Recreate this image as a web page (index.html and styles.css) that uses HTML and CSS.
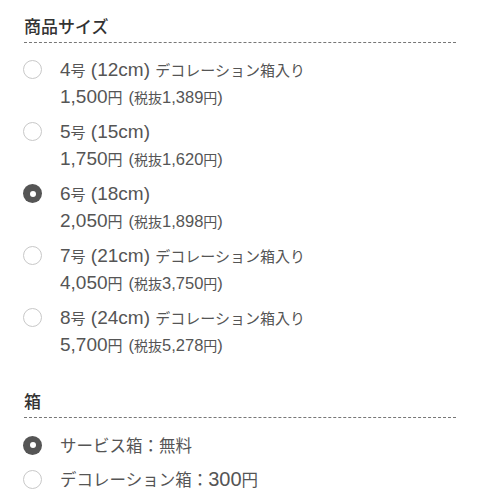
FILE: index.html
```html
<!DOCTYPE html>
<html lang="ja">
<head>
<meta charset="utf-8">
<link rel="stylesheet" href="styles.css">
</head>
<body>
<div class="page">
  <section class="group">
    <h2 class="group-title">商品サイズ</h2>
    <div class="options options-size">
      <label class="option">
        <span class="radio"></span>
        <span class="option-text">
          <span class="line"><span class="en">4</span>号<span class="en"> (12cm) </span>デコレーション箱入り</span>
          <span class="line"><span class="en">1,500</span>円<small class="tax"><span class="en">(</span>税抜<span class="en">1,389</span>円<span class="en">)</span></small></span>
        </span>
      </label>
      <label class="option">
        <span class="radio"></span>
        <span class="option-text">
          <span class="line"><span class="en">5</span>号<span class="en"> (15cm)</span></span>
          <span class="line"><span class="en">1,750</span>円<small class="tax"><span class="en">(</span>税抜<span class="en">1,620</span>円<span class="en">)</span></small></span>
        </span>
      </label>
      <label class="option">
        <span class="radio checked"></span>
        <span class="option-text">
          <span class="line"><span class="en">6</span>号<span class="en"> (18cm)</span></span>
          <span class="line"><span class="en">2,050</span>円<small class="tax"><span class="en">(</span>税抜<span class="en">1,898</span>円<span class="en">)</span></small></span>
        </span>
      </label>
      <label class="option">
        <span class="radio"></span>
        <span class="option-text">
          <span class="line"><span class="en">7</span>号<span class="en"> (21cm) </span>デコレーション箱入り</span>
          <span class="line"><span class="en">4,050</span>円<small class="tax"><span class="en">(</span>税抜<span class="en">3,750</span>円<span class="en">)</span></small></span>
        </span>
      </label>
      <label class="option">
        <span class="radio"></span>
        <span class="option-text">
          <span class="line"><span class="en">8</span>号<span class="en"> (24cm) </span>デコレーション箱入り</span>
          <span class="line"><span class="en">5,700</span>円<small class="tax"><span class="en">(</span>税抜<span class="en">5,278</span>円<span class="en">)</span></small></span>
        </span>
      </label>
    </div>
  </section>
  <section class="group group-box">
    <h2 class="group-title">箱</h2>
    <div class="options options-box">
      <label class="option">
        <span class="radio checked"></span>
        <span class="option-text"><span class="line">サービス箱：無料</span></span>
      </label>
      <label class="option">
        <span class="radio"></span>
        <span class="option-text"><span class="line">デコレーション箱：<span class="en">300</span>円</span></span>
      </label>
    </div>
  </section>
</div>
</body>
</html>
```
FILE: styles.css
```css
html, body {
  margin: 0;
  padding: 0;
  background: #ffffff;
}
body {
  font-family: "Noto Sans CJK JP", sans-serif;
  color: #555555;
}
.page {
  padding: 14px 24px 0 24px;
}
.group-title {
  margin: 0;
  font-size: 17px;
  font-weight: 500;
  line-height: 24px;
  padding-bottom: 4px;
  color: #333333;
  border-bottom: 1px dashed #777777;
}
.group-box {
  margin-top: 27px;
}
.options {
  display: flex;
  flex-direction: column;
  padding-top: 9px;
}
.options-box {
  padding-top: 10px;
}
.option {
  display: flex;
  align-items: flex-start;
  gap: 18px;
  padding: 4px 0;
  font-size: 15px;
  line-height: 27px;
}
.options-box .option {
  padding: 3.5px 0;
  font-size: 16.5px;
}
.radio {
  flex: none;
  box-sizing: border-box;
  width: 19px;
  height: 19px;
  margin-top: 4px;
  margin-left: -1px;
  border-radius: 50%;
  border: 1px solid #c8c8c8;
  background: #fff;
  position: relative;
}
.radio.checked {
  border: none;
  background: #555555;
}
.radio.checked::after {
  content: "";
  position: absolute;
  left: 50%;
  top: 50%;
  width: 6px;
  height: 6px;
  margin: -3px 0 0 -3px;
  border-radius: 50%;
  background: #ffffff;
}
.option-text {
  display: flex;
  flex-direction: column;
}
.line {
  display: block;
  height: 27px;
  white-space: nowrap;
}
.en {
  font-family: "Liberation Sans", sans-serif;
  font-size: 19px;
  line-height: 1;
}
.options-box .en {
  font-size: 20px;
}
.tax {
  margin-left: 6px;
  font-size: 14px;
  line-height: 1;
}
.tax .en {
  font-size: 16.5px;
}
```
